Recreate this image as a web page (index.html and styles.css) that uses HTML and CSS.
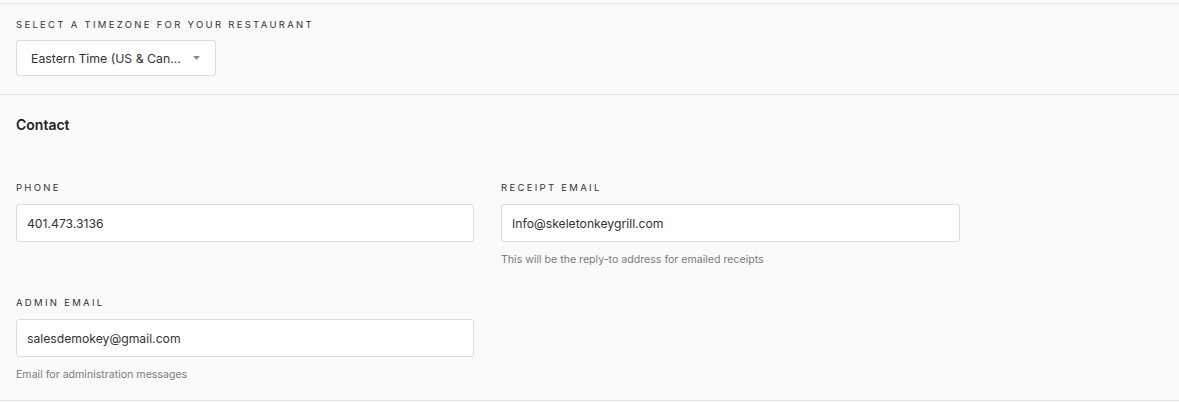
FILE: index.html
```html
<!DOCTYPE html>
<html>
<head>
<meta charset="utf-8">
<link rel="stylesheet" href="styles.css">
</head>
<body>
<div class="page">
  <section class="section tz">
    <div class="label">Select a timezone for your restaurant</div>
    <div class="select">
      <span class="select-text">Eastern Time (US &amp; Can...</span>
      <svg class="caret" width="7" height="4" viewBox="0 0 7 4"><path d="M0 0H7L3.5 4Z" fill="#8a8a8a"/></svg>
    </div>
  </section>
  <section class="section contact">
    <h2 class="title">Contact</h2>
    <div class="grid">
      <div class="field">
        <div class="label">Phone</div>
        <div class="input">401.473.3136</div>
      </div>
      <div class="field">
        <div class="label">Receipt Email</div>
        <div class="input">Info@skeletonkeygrill.com</div>
        <div class="help">This will be the reply-to address for emailed receipts</div>
      </div>
      <div class="field">
        <div class="label">Admin Email</div>
        <div class="input">salesdemokey@gmail.com</div>
        <div class="help">Email for administration messages</div>
      </div>
    </div>
  </section>
</div>
</body>
</html>
```
FILE: styles.css
```css
html, body {
  margin: 0;
  padding: 0;
  background: #fafafa;
  font-family: "Inter", "Liberation Sans", sans-serif;
  color: #333;
}
body {
  padding-top: 3px;
}
.page {
  border-top: 1px solid #e6e6e6;
}
.section {
  padding: 0 16px;
  border-bottom: 1px solid #e6e6e6;
}
.tz {
  padding-top: 14px;
  padding-bottom: 18px;
}
.label {
  font-size: 9.5px;
  line-height: 14px;
  letter-spacing: 2.3px;
  text-transform: uppercase;
  color: #333;
  margin-bottom: 8px;
}
.select {
  height: 34px;
  background: #fff;
  border: 1px solid #dcdcdc;
  border-radius: 3px;
  display: flex;
  align-items: center;
  justify-content: space-between;
  padding: 0 15px 0 14px;
  box-sizing: content-box;
  width: 169px;
  font-size: 12.3px;
  color: #333;
}
.caret {
  display: block;
}
.contact {
  padding-top: 20px;
  padding-bottom: 17px;
}
.title {
  margin: 0;
  font-size: 14px;
  line-height: 20px;
  font-weight: 600;
  color: #222;
  margin-bottom: 46px;
}
.grid {
  display: grid;
  grid-template-columns: 458px 459px;
  column-gap: 27px;
  row-gap: 28px;
  align-items: start;
}
.grid .label {
  margin-bottom: 9px;
}
.input {
  height: 36px;
  background: #fff;
  border: 1px solid #dcdcdc;
  border-radius: 3px;
  display: flex;
  align-items: center;
  padding: 0 10px;
  font-size: 12.2px;
  color: #333;
}
.help {
  margin-top: 10px;
  font-size: 10.6px;
  line-height: 16px;
  color: #7a7a7a;
}
```
